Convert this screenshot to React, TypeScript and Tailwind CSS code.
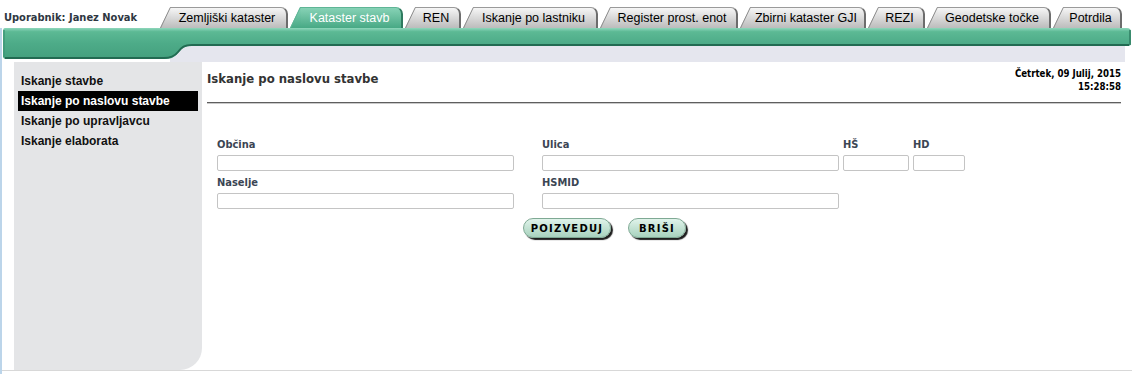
import clsx from "clsx";

type TabItem = { label: string; width: string; active?: boolean };

const tabs: TabItem[] = [
  { label: "Zemljiški kataster", width: "w-[128px]" },
  { label: "Kataster stavb", width: "w-[113px]", active: true },
  { label: "REN", width: "w-[56px]" },
  { label: "Iskanje po lastniku", width: "w-[135px]" },
  { label: "Register prost. enot", width: "w-[138px]" },
  { label: "Zbirni kataster GJI", width: "w-[126px]" },
  { label: "REZI", width: "w-[57px]" },
  { label: "Geodetske točke", width: "w-[124px]" },
  { label: "Potrdila", width: "w-[69px]" },
];

const menu = [
  "Iskanje stavbe",
  "Iskanje po naslovu stavbe",
  "Iskanje po upravljavcu",
  "Iskanje elaborata",
];

const tahoma = "font-['DejaVu_Sans_Condensed','DejaVu_Sans',sans-serif] font-stretch-condensed";
const verdana = "font-['DejaVu_Sans',Verdana,sans-serif]";
const arial = "font-['Liberation_Sans',Arial,sans-serif]";

function Tab({ tab, idx }: { tab: TabItem; idx: number }) {
  const gid = `tabgrad${idx}`;
  const top = tab.active ? "#86d2b6" : "#f6f6f6";
  const bottom = tab.active ? "#47a985" : "#bcbcbc";

  return (
    <div className={clsx("flex h-[21px]", tab.width)}>
      <svg width="11" height="21" viewBox="0 0 11 21" className="shrink-0">
        <defs>
          <linearGradient id={gid} x1="0" y1="0" x2="0" y2="1">
            <stop offset="0" stopColor={top} />
            <stop offset="1" stopColor={bottom} />
          </linearGradient>
        </defs>
        <polygon points="0,21 10,0 11,0 11,21" fill={`url(#${gid})`} />
        <line
          x1="0.5"
          y1="21"
          x2="10.3"
          y2="0.5"
          stroke={tab.active ? "#5fb596" : "#8c8c8c"}
          strokeWidth="1"
        />
        <line x1="10" y1="0.5" x2="11" y2="0.5" stroke={tab.active ? "#5fb596" : "#9a9a9a"} />
      </svg>
      <div
        className={clsx(
          "flex flex-1 items-center justify-center rounded-tr-[7px] border-t border-r-2 pr-[3px] text-[12.5px] leading-none",
          arial,
          tab.active
            ? "border-t-[#5fb596] border-r-[#2e7a5f] bg-linear-to-b from-[#86d2b6] to-[#47a985] text-white"
            : "border-t-[#9a9a9a] border-r-[#6d6d6d] bg-linear-to-b from-[#f6f6f6] to-[#bcbcbc] text-black"
        )}
      >
        {tab.label}
      </div>
    </div>
  );
}

function Band() {
  return (
    <svg width="1130" height="34" viewBox="0 0 1130 34" className="block">
      <defs>
        <linearGradient id="bandgrad" x1="0" y1="0" x2="0" y2="1">
          <stop offset="0" stopColor="#8fd7bc" />
          <stop offset="0.12" stopColor="#5cb994" />
          <stop offset="0.5" stopColor="#4dab88" />
          <stop offset="1" stopColor="#44a07e" />
        </linearGradient>
      </defs>
      <rect x="168" y="17" width="955" height="17" fill="#e5e6ee" />
      <path
        d="M3,0 H1125 Q1129,0 1129,4 V15 Q1129,18 1126,18 H190 C182,18 180,20 176,25 C172,30 168,31 162,31 H4 Q1,31 1,28 V3 Q1,0 3,0 Z"
        fill="url(#bandgrad)"
      />
      <path
        d="M1127,17 H190 C182,17 180,19 176,24 C172,29 168,30 162,30 H3"
        fill="none"
        stroke="#226b52"
        strokeWidth="2"
      />
      <path d="M1128,2 V17" stroke="#2f7e62" strokeWidth="1.5" />
      <path d="M2,2 V29" stroke="#3e9878" strokeWidth="1.5" />
    </svg>
  );
}

function Field({ label, width }: { label: string; width: string }) {
  return (
    <div className={clsx("flex flex-col", width)}>
      <span className={clsx("h-[13px] text-[11px] font-bold leading-[13px] text-[#3b4553]", tahoma)}>
        {label}
      </span>
      <input
        type="text"
        className="mt-[4px] h-[16px] w-full rounded-[2px] border border-[#c4c4c4] bg-white outline-none"
      />
    </div>
  );
}

function PillButton({ label, width }: { label: string; width: string }) {
  return (
    <button
      type="button"
      className={clsx(
        "flex h-[20px] items-center justify-center rounded-full border border-[#7fa994] bg-linear-to-b from-[#e0f3ea] to-[#a8d2be] text-[10px] font-bold tracking-[1.2px] text-black shadow-[2px_2px_1px_#1e1e1e]",
        verdana,
        width
      )}
    >
      {label}
    </button>
  );
}

export default function App() {
  return (
    <div className="h-[374px] w-[1132px] overflow-hidden bg-white">
      {/* Top bar with user and tabs */}
      <div className="flex h-[28px] items-end">
        <div className={clsx("w-[160px] self-center pt-[8px] pl-[4px] text-[11px] font-bold text-[#2e3742]", tahoma)}>
          Uporabnik: Janez Novak
        </div>
        <div className="flex gap-[2px]">
          {tabs.map((t, i) => (
            <Tab key={t.label} tab={t} idx={i} />
          ))}
        </div>
      </div>

      <div className="border-l-2 border-[#bcd5ea] pb-[3px]">
        <Band />

        <div className="flex h-[309px] border-b border-[#d8d8d8]">
          {/* Sidebar */}
          <aside className="ml-[12px] w-[188px] rounded-br-[22px] bg-[#e4e5e7] pt-[9px]">
            {menu.map((m, i) => (
              <div
                key={m}
                className={clsx(
                  "mx-[4px] flex h-[20px] items-center px-[3px] text-[12px] font-bold",
                  arial,
                  i === 1 ? "bg-black text-white" : "text-[#111]"
                )}
              >
                {m}
              </div>
            ))}
          </aside>

          {/* Main */}
          <main className="flex flex-1 flex-col pt-[5px] pr-[11px] pl-[5px]">
            <div className="flex items-start justify-between">
              <h1 className={clsx("mt-[4px] text-[13px] font-bold leading-[16px] text-[#333]", tahoma)}>
                Iskanje po naslovu stavbe
              </h1>
              <div className={clsx("text-right text-[9.6px] font-bold leading-[13px] text-black", tahoma)}>
                <div>Četrtek, 09 Julij, 2015</div>
                <div>15:28:58</div>
              </div>
            </div>
            <div className="mt-[9px] border-t border-b border-t-[#5e5e5e] border-b-[#c9c9c9]" />

            <div className="ml-[10px] mt-[34px] flex flex-col">
              <div className="flex">
                <Field label="Občina" width="w-[297px]" />
                <Field label="Ulica" width="ml-[28px] w-[297px]" />
                <Field label="HŠ" width="ml-[4px] w-[66px]" />
                <Field label="HD" width="ml-[4px] w-[52px]" />
              </div>
              <div className="mt-[5px] flex">
                <Field label="Naselje" width="w-[297px]" />
                <Field label="HSMID" width="ml-[28px] w-[297px]" />
              </div>
              <div className="mt-[9px] ml-[306px] flex gap-[17px]">
                <PillButton label="POIZVEDUJ" width="w-[88px]" />
                <PillButton label="BRIŠI" width="w-[58px]" />
              </div>
            </div>
          </main>
        </div>
      </div>
    </div>
  );
}
